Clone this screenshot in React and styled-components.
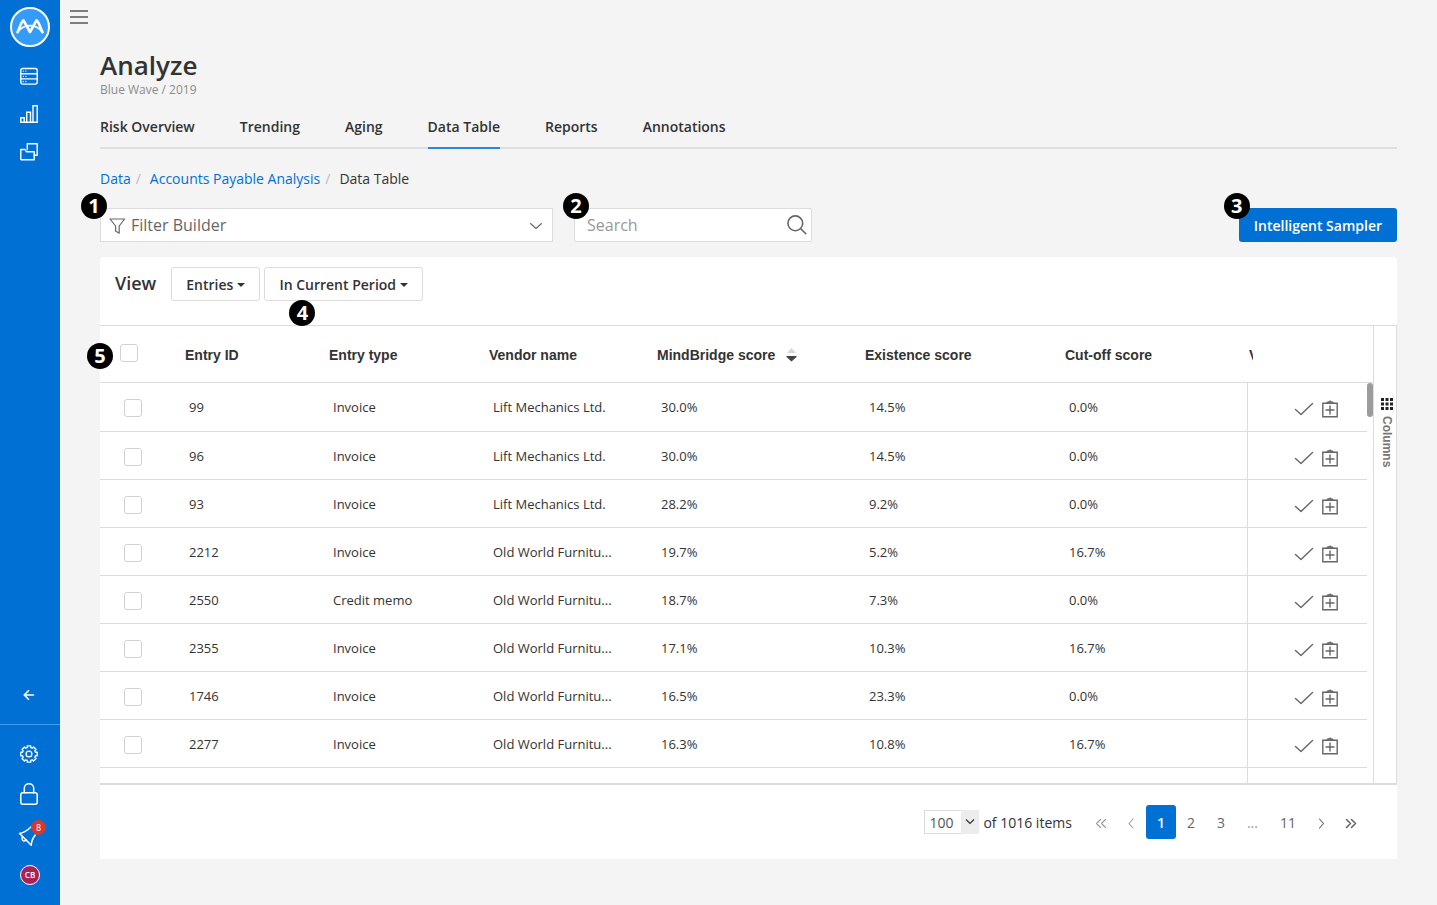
import React from "react";
import styled, { createGlobalStyle, css } from "styled-components";

const GlobalStyle = createGlobalStyle`
  *, *::before, *::after { box-sizing: border-box; }
  body {
    margin: 0;
    background: #f4f4f4;
    color: #333;
    font-family: "Open Sans", "Noto Sans", sans-serif;
    font-size: 14px;
    line-height: 20px;
  }
  button, input, select { font: inherit; color: inherit; }
  button { cursor: pointer; }
  svg { display: block; flex: none; }
`;

const BLUE = "#0070d4";
const LINE = "#dcdcdc";

const Page = styled.div`
  display: flex;
  min-height: 100vh;
`;

const Sidebar = styled.aside`
  flex: none;
  display: flex;
  flex-direction: column;
  width: 60px;
  padding: 7px 0 10px;
  background: ${BLUE};
  color: #fff;
`;

const Logo = styled.a`
  display: block;
  margin: 0 auto 10px;
`;

const SideGroup = styled.nav`
  display: flex;
  flex-direction: column;
`;

const SideFooter = styled(SideGroup)`
  margin-top: auto;
`;

const SideButton = styled.button`
  position: relative;
  display: flex;
  align-items: center;
  justify-content: center;
  width: 100%;
  height: ${(p) => (p.$tall ? 40 : 38)}px;
  padding: 0;
  border: 0;
  background: none;
`;

const Divider = styled.hr`
  width: 100%;
  margin: 10px 0;
  border: 0;
  border-top: 1px solid #3f9cec;
`;

const CountBadge = styled.span`
  position: absolute;
  top: 5px;
  right: 14px;
  width: 15px;
  height: 15px;
  border-radius: 50%;
  background: #cf3a34;
  font-size: 9px;
  line-height: 15px;
  text-align: center;
`;

const Avatar = styled.span`
  width: 20px;
  height: 20px;
  border: 1px solid #fff;
  border-radius: 50%;
  background: #ad1f57;
  font-size: 8px;
  font-weight: 600;
  line-height: 18px;
  text-align: center;
`;

const Main = styled.main`
  flex: 1;
  min-width: 0;
  padding: 0 40px 46px;
`;

const TopBar = styled.div`
  display: flex;
  height: 48px;
  margin-left: -40px;
  padding: 8px 10px;
`;

const MenuButton = styled.button`
  width: 18px;
  height: 18px;
  padding: 0;
  border: 0;
  background: none;
`;

const Title = styled.h1`
  margin: 0;
  font-size: 26px;
  font-weight: 600;
  line-height: 34px;
`;

const Subtitle = styled.p`
  margin: 0;
  color: #8c8c8c;
  font-size: 12px;
  line-height: 16px;
`;

const Tabs = styled.nav`
  display: flex;
  gap: 45px;
  margin-top: 19px;
  border-bottom: 2px solid #dedede;
`;

const Tab = styled.a`
  margin-bottom: -2px;
  padding-bottom: 10px;
  border-bottom: 2px solid ${(p) => (p.$active ? "#2d85dc" : "transparent")};
  color: #333;
  font-weight: 600;
  text-decoration: none;
`;

const Breadcrumb = styled.nav`
  display: flex;
  margin: 20px 0 19px;

  a { color: ${BLUE}; text-decoration: none; }
  i { margin: 0 9px 0 5px; color: #bbb; font-style: normal; }
`;

const Toolbar = styled.div`
  display: flex;
  align-items: center;
  gap: 21px;
  margin-bottom: 15px;
`;

const Anchor = styled.div`
  position: relative;
  ${(p) => p.$end && css`margin-left: auto;`}
`;

const Marker = styled.span`
  position: absolute;
  z-index: 1;
  left: ${(p) => p.$x}px;
  top: ${(p) => p.$y}px;
  width: 26px;
  height: 26px;
  border-radius: 50%;
  background: #000;
  color: #fff;
  font-size: 20px;
  font-weight: 700;
  font-family: "Open Sans", "Noto Sans", sans-serif;
  line-height: 26px;
  text-align: center;
  pointer-events: none;
`;

const FilterButton = styled.button`
  display: flex;
  align-items: center;
  gap: 5px;
  width: 453px;
  height: 34px;
  padding: 0 9px 0 8px;
  border: 1px solid ${LINE};
  background: #fff;
  color: #666;
  font-size: 16px;

  span { flex: 1; text-align: left; }
`;

const SearchBox = styled.label`
  display: flex;
  align-items: center;
  width: 238px;
  height: 34px;
  padding: 0 4px 0 12px;
  border: 1px solid ${LINE};
  border-radius: 2px;
  background: #fff;
`;

const SearchInput = styled.input`
  flex: 1;
  min-width: 0;
  padding: 0;
  border: 0;
  outline: 0;
  background: none;
  font-size: 16px;

  &::placeholder { color: #999; opacity: 1; }
`;

const PrimaryButton = styled.button`
  height: 34px;
  padding: 2px 15px 0;
  border: 0;
  border-radius: 3px;
  background: ${BLUE};
  color: #fff;
  font-weight: 600;
`;

const Card = styled.section`
  border-radius: 4px 4px 0 0;
  background: #fff;
`;

const ViewBar = styled.div`
  display: flex;
  gap: 4px;
  height: 68px;
  padding: 10px 15px;
`;

const ViewLabel = styled.h2`
  margin: 0 11px 0 0;
  font-size: 18px;
  font-weight: 600;
  line-height: 32px;
`;

const DropButton = styled.button`
  display: flex;
  align-items: center;
  gap: 4px;
  height: 34px;
  padding: 2px 14px 0;
  border: 1px solid ${LINE};
  border-radius: 3px;
  background: #fff;
  font-weight: 600;
`;

const Caret = styled.span`
  border: 4px solid transparent;
  border-top-color: #333;
  border-bottom: 0;
`;

const Grid = styled.div`
  display: flex;
  border-top: 1px solid ${LINE};
  border-bottom: 2px solid ${LINE};
`;

const Table = styled.table`
  flex: 1;
  width: 0;
  table-layout: fixed;
  border-collapse: separate;
  border-spacing: 0;
`;

const Col = styled.col`
  width: ${(p) => (p.$w ? `${p.$w}px` : "auto")};
`;

const HeadCell = styled.th`
  position: relative;
  height: 57px;
  padding: 2px 16px 0;
  border-bottom: 1px solid ${LINE};
  font: 700 14px/20px "Liberation Sans", Arial, sans-serif;
  text-align: left;
  white-space: nowrap;
  ${(p) => p.$check && css`padding: 2px 20px 0;`}
  ${(p) => p.$clipped && css`padding: 2px 2px 0;`}
`;

const SortLabel = styled.span`
  display: flex;
  align-items: center;
  gap: 11px;
`;

const ClippedText = styled.span`
  display: block;
  width: 4px;
  overflow: hidden;
`;

const Cell = styled.td`
  height: 48px;
  padding: 0 20px;
  border-bottom: 1px solid ${LINE};
  font-size: 13px;
  white-space: nowrap;
  ${(p) => p.$check && css`padding: 2px 24px 0;`}
  ${(p) => p.$pinned && css`
    padding: 4px 28px 0 46px;
    border-left: 1px solid ${LINE};
  `}
`;

const BodyRow = styled.tr`
  &:first-child td { height: 49px; }
`;

const TailCell = styled.td`
  height: 15px;
  padding: 0;
  ${(p) => p.$pinned && css`border-left: 1px solid ${LINE};`}
`;

const Checkbox = styled.input`
  appearance: none;
  display: block;
  width: 18px;
  height: 18px;
  margin: 0;
  border: 1px solid #d2d2d2;
  border-radius: 3px;
  background: #fff;

  &:checked { background: ${BLUE}; }
`;

const HeadCheckbox = styled(Checkbox)`
  margin-bottom: 4px;
`;

const RowActions = styled.div`
  display: flex;
  align-items: center;
  gap: 7px;
`;

const IconButton = styled.button`
  padding: 0;
  border: 0;
  background: none;
  color: #666;
`;

const ScrollTrack = styled.div`
  width: 6px;

  &::before {
    content: "";
    display: block;
    height: 57px;
    border-bottom: 1px solid ${LINE};
  }
`;

const ScrollThumb = styled.div`
  height: 34px;
  border-radius: 3px;
  background: #9c9c9c;
`;

const ColumnsPanel = styled.div`
  width: 24px;
  padding-top: 72px;
  border: 1px solid ${LINE};
  border-width: 0 1px;
`;

const ColumnsButton = styled.button`
  display: flex;
  flex-direction: column;
  align-items: center;
  gap: 6px;
  width: 100%;
  padding: 0 0 0 4px;
  border: 0;
  background: none;
  color: #777;
  font: 700 12px/16px "Liberation Sans", Arial, sans-serif;

  span { writing-mode: vertical-rl; }
`;

const Footer = styled.div`
  display: flex;
  align-items: center;
  justify-content: flex-end;
  height: 74px;
  padding: 0 30px 0 15px;
`;

const SizeSelect = styled.div`
  position: relative;
  margin-right: 4px;

  svg {
    position: absolute;
    top: 0;
    right: 0;
    pointer-events: none;
  }
`;

const Select = styled.select`
  appearance: none;
  display: block;
  width: 55px;
  height: 24px;
  padding: 2px 4px 0;
  border: 1px solid ${LINE};
  border-radius: 0;
  background: #fff;
  color: #555;
`;

const ItemCount = styled.span`
  padding-top: 2px;
`;

const Pager = styled.nav`
  display: flex;
  margin-left: 14px;
`;

const PageButton = styled.button`
  display: flex;
  align-items: center;
  justify-content: center;
  min-width: 30px;
  height: 34px;
  padding: 2px ${(p) => (p.$icon ? 0 : 11)}px 0;
  border: 0;
  border-radius: 3px;
  background: ${(p) => (p.$current ? BLUE : "none")};
  color: ${(p) => (p.$current ? "#fff" : p.$muted ? "#999" : "#666")};
  font-weight: ${(p) => (p.$current ? 600 : 400)};
`;

const Stroke = ({ size = 20, width = 1.3, children, ...rest }) => (
  <svg
    width={size}
    height={size}
    viewBox={`0 0 ${size} ${size}`}
    fill="none"
    stroke="currentColor"
    strokeWidth={width}
    strokeLinecap="round"
    strokeLinejoin="round"
    aria-hidden="true"
    {...rest}
  >
    {children}
  </svg>
);

const LogoIcon = () => (
  <svg width="40" height="40" viewBox="0 0 40 40" fill="none" aria-hidden="true">
    <circle cx="20" cy="20" r="19" fill="#349cf8" stroke="#fff" strokeWidth="2" />
    <g stroke="#fff" strokeLinecap="round" strokeLinejoin="round">
      <path d="M7.500 25.200C9.500 22 10.500 15.500 13.500 13.300L20 25l6.500-11.700c3 2.200 4 8.700 6 11.900" strokeWidth="2.600" />
      <path d="M8.500 24C11.500 20.500 15 18.700 20 18.700s8.500 1.800 11.500 5.300" strokeWidth="1.800" />
      <path d="M17.300 19.500 20 24.500l2.700-5" strokeWidth="1.400" />
    </g>
  </svg>
);

const TableIcon = () => (
  <Stroke width={1.4}>
    <rect x=".8" y="2.500" width="16.400" height="15.600" rx="2" />
    <path d="M1 7.700h16M1 12.900h16" />
    <path d="M3.200 5.100h.1M5.800 5.100h.1M3.200 10.300h.1M5.800 10.300h.1M3.200 15.500h.1M5.800 15.500h.1" strokeWidth="1.300" />
  </Stroke>
);

const BarsIcon = () => (
  <Stroke width={1.4} strokeLinejoin="miter">
    <path d="M.8 18.300v-4.500h3.400v4.500zM6.700 18.300V8.200h3.800v10.100zM13 18.300V1.800h4.200v16.500zM4.200 18.300h9" />
  </Stroke>
);

const FoldersIcon = () => (
  <Stroke width={1.4}>
    <path d="M7.300 7.500V1.800h9.900v11.400h-3" />
    <path d="M.8 17.300V7.500h4.300l1.300 2.200h7.800v8.100H1.300z" />
  </Stroke>
);

const ArrowLeftIcon = () => (
  <Stroke width={1.6}>
    <path d="M13.500 10h-9M8.500 5.700 4.200 10l4.300 4.300" />
  </Stroke>
);

const GEAR_TEETH = Array.from({ length: 8 }, (_, i) => {
  const at = (r, deg) => {
    const a = ((i * 45 + deg) * Math.PI) / 180;
    return `${(9 + r * Math.cos(a)).toFixed(2)} ${(9 + r * Math.sin(a)).toFixed(2)}`;
  };
  return `${i ? "L" : "M"}${at(6.7, -15)}L${at(8.4, -12)}L${at(8.4, 12)}L${at(6.7, 15)}`;
}).join("");

const GearIcon = () => (
  <Stroke width={1.3}>
    <path d={`${GEAR_TEETH}Z`} />
    <circle cx="9" cy="9" r="2.900" />
  </Stroke>
);

const LockIcon = () => (
  <Stroke size={24} width={1.5}>
    <rect x="2.800" y="9.800" width="16.400" height="11.400" rx="2" />
    <path d="M6.300 9.800V5.200a4.700 4.400 0 0 1 9.400 0v4.600" />
  </Stroke>
);

const MegaphoneIcon = () => (
  <Stroke size={24} width={1.5}>
    <path d="M1.600 10.500C6.500 9.500 10 7 13.500 3.500M1.600 10.500l11.700 11.800c.2-4 1.500-7.300 4-10.300" />
    <path d="M4.300 13.500c-.6 2.300 0 4.500 1.600 4.600 1.200.1 1.900-.6 2.200-1.500" />
  </Stroke>
);

const MenuIcon = () => (
  <Stroke size={18} width={1.6} color="#555" strokeLinecap="butt">
    <path d="M0 3h18M0 9h18M0 15h18" />
  </Stroke>
);

const FunnelIcon = () => (
  <Stroke size={17} width={1.2}>
    <path d="M1 2h14.600L10.200 9v7.200L6.600 14V9z" />
  </Stroke>
);

const ChevronDownIcon = () => (
  <Stroke size={14} width={1.1}>
    <path d="m1.500 5.500 5.500 5 5.500-5" />
  </Stroke>
);

const SearchIcon = () => (
  <Stroke size={20} width={1.6} color="#666">
    <circle cx="8.300" cy="8.300" r="7.400" />
    <path d="m13.800 13.800 5 5" />
  </Stroke>
);

const SortIcon = () => (
  <svg width="11" height="14" viewBox="0 0 11 14" aria-hidden="true">
    <path d="M1 5 5.500 0 10 5z" fill="#d6d6d6" />
    <path d="M.5 8v1l5 4.500 5-4.500V8z" fill="#444" />
  </svg>
);

const CheckIcon = () => (
  <Stroke size={20} width={1.4}>
    <path d="m1.500 10.500 5.500 5L18.500 4.500" />
  </Stroke>
);

const ClipboardPlusIcon = () => (
  <Stroke size={18} width={1.4} strokeLinejoin="miter">
    <path d="M1.800 3.300h14.400v13.500H1.800zM9 6v8M5 10h8" />
    <path d="M5.500 2.800l1.200-1.200h1.100Q9 0 10.200 1.600h1.100l1.200 1.200z" fill="currentColor" strokeWidth=".6" />
  </Stroke>
);

const GridIcon = () => (
  <svg width="12" height="12" viewBox="0 0 12 12" fill="#222" aria-hidden="true">
    {[0, 4.5, 9].map((y) =>
      [0, 4.5, 9].map((x) => <rect key={`${x}-${y}`} x={x} y={y} width="3" height="3" />)
    )}
  </svg>
);

const PAGE_PATHS = {
  first: "M7.500 4.500 3.500 8.500l4 4M12.500 4.500l-4 4 4 4",
  prev: "M10 4 6 8.500l4 4.500",
  next: "M5.500 4l4 4.500-4 4.500",
  last: "M2.500 4.500l4 4-4 4M7.500 4.500l4 4-4 4",
};

const PageIcon = ({ name }) => (
  <Stroke size={16} width={name === "last" ? 1.6 : 1.1}>
    <path d={PAGE_PATHS[name]} />
  </Stroke>
);

const TABS = ["Risk Overview", "Trending", "Aging", "Data Table", "Reports", "Annotations"];

const ROWS = [
  ["99", "Invoice", "Lift Mechanics Ltd.", "30.0%", "14.5%", "0.0%"],
  ["96", "Invoice", "Lift Mechanics Ltd.", "30.0%", "14.5%", "0.0%"],
  ["93", "Invoice", "Lift Mechanics Ltd.", "28.2%", "9.2%", "0.0%"],
  ["2212", "Invoice", "Old World Furnitu...", "19.7%", "5.2%", "16.7%"],
  ["2550", "Credit memo", "Old World Furnitu...", "18.7%", "7.3%", "0.0%"],
  ["2355", "Invoice", "Old World Furnitu...", "17.1%", "10.3%", "16.7%"],
  ["1746", "Invoice", "Old World Furnitu...", "16.5%", "23.3%", "0.0%"],
  ["2277", "Invoice", "Old World Furnitu...", "16.3%", "10.8%", "16.7%"],
];

const COLUMN_WIDTHS = [69, 144, 160, 168, 208, 200, null, 120];

export default function App() {
  return (
    <>
      <GlobalStyle />
      <Page>
        <Sidebar>
          <Logo href="#" aria-label="Home"><LogoIcon /></Logo>
          <SideGroup aria-label="Primary">
            <SideButton aria-label="Data"><TableIcon /></SideButton>
            <SideButton aria-label="Analyze"><BarsIcon /></SideButton>
            <SideButton aria-label="Files"><FoldersIcon /></SideButton>
          </SideGroup>
          <SideFooter aria-label="Account">
            <SideButton aria-label="Back"><ArrowLeftIcon /></SideButton>
            <Divider />
            <SideButton $tall aria-label="Settings"><GearIcon /></SideButton>
            <SideButton $tall aria-label="Security"><LockIcon /></SideButton>
            <SideButton $tall aria-label="Announcements">
              <MegaphoneIcon />
              <CountBadge>8</CountBadge>
            </SideButton>
            <SideButton $tall aria-label="Profile"><Avatar>CB</Avatar></SideButton>
          </SideFooter>
        </Sidebar>

        <Main>
          <TopBar>
            <MenuButton aria-label="Menu"><MenuIcon /></MenuButton>
          </TopBar>
          <Title>Analyze</Title>
          <Subtitle>Blue Wave / 2019</Subtitle>
          <Tabs>
            {TABS.map((tab) => (
              <Tab key={tab} href="#" $active={tab === "Data Table"}>{tab}</Tab>
            ))}
          </Tabs>
          <Breadcrumb aria-label="Breadcrumb">
            <a href="#">Data</a><i>/</i>
            <a href="#">Accounts Payable Analysis</a><i>/</i>
            <span>Data Table</span>
          </Breadcrumb>

          <Toolbar>
            <Anchor>
              <Marker $x={-19} $y={-15}>1</Marker>
              <FilterButton>
                <FunnelIcon />
                <span>Filter Builder</span>
                <ChevronDownIcon />
              </FilterButton>
            </Anchor>
            <Anchor>
              <Marker $x={-11} $y={-15}>2</Marker>
              <SearchBox>
                <SearchInput type="text" placeholder="Search" aria-label="Search" />
                <SearchIcon />
              </SearchBox>
            </Anchor>
            <Anchor $end>
              <Marker $x={-15} $y={-15}>3</Marker>
              <PrimaryButton>Intelligent Sampler</PrimaryButton>
            </Anchor>
          </Toolbar>

          <Card>
            <ViewBar>
              <ViewLabel>View</ViewLabel>
              <DropButton>Entries<Caret /></DropButton>
              <Anchor>
                <DropButton>In Current Period<Caret /></DropButton>
                <Marker $x={25} $y={33}>4</Marker>
              </Anchor>
            </ViewBar>

            <Grid>
              <Table>
                <colgroup>
                  {COLUMN_WIDTHS.map((w, i) => <Col key={i} $w={w} />)}
                </colgroup>
                <thead>
                  <tr>
                    <HeadCell $check>
                      <Marker $x={-13} $y={17}>5</Marker>
                      <HeadCheckbox type="checkbox" aria-label="Select all entries" />
                    </HeadCell>
                    <HeadCell>Entry ID</HeadCell>
                    <HeadCell>Entry type</HeadCell>
                    <HeadCell>Vendor name</HeadCell>
                    <HeadCell><SortLabel>MindBridge score<SortIcon /></SortLabel></HeadCell>
                    <HeadCell>Existence score</HeadCell>
                    <HeadCell>Cut-off score</HeadCell>
                    <HeadCell $clipped><ClippedText>V</ClippedText></HeadCell>
                  </tr>
                </thead>
                <tbody>
                  {ROWS.map((row) => (
                    <BodyRow key={row[0]}>
                      <Cell $check>
                        <Checkbox type="checkbox" aria-label={`Select entry ${row[0]}`} />
                      </Cell>
                      {row.map((value, i) => <Cell key={i}>{value}</Cell>)}
                      <Cell $pinned>
                        <RowActions>
                          <IconButton aria-label="Mark as reviewed"><CheckIcon /></IconButton>
                          <IconButton aria-label="Add to audit plan"><ClipboardPlusIcon /></IconButton>
                        </RowActions>
                      </Cell>
                    </BodyRow>
                  ))}
                  <tr aria-hidden="true">
                    <TailCell colSpan={7} />
                    <TailCell $pinned />
                  </tr>
                </tbody>
              </Table>
              <ScrollTrack><ScrollThumb /></ScrollTrack>
              <ColumnsPanel>
                <ColumnsButton><GridIcon /><span>Columns</span></ColumnsButton>
              </ColumnsPanel>
            </Grid>

            <Footer>
              <SizeSelect>
                <Select aria-label="Items per page" defaultValue="100">
                  <option>50</option>
                  <option>100</option>
                </Select>
                <svg width="18" height="24" viewBox="0 0 18 24" aria-hidden="true">
                  <rect width="18" height="24" fill="#ececec" />
                  <path d="m5 9.500 4 4 4-4" fill="none" stroke="#333" strokeWidth="1.200" />
                </svg>
              </SizeSelect>
              <ItemCount>of 1016 items</ItemCount>
              <Pager aria-label="Pagination">
                <PageButton $icon $muted aria-label="First page"><PageIcon name="first" /></PageButton>
                <PageButton $icon $muted aria-label="Previous page"><PageIcon name="prev" /></PageButton>
                <PageButton $current>1</PageButton>
                <PageButton>2</PageButton>
                <PageButton>3</PageButton>
                <PageButton $muted>...</PageButton>
                <PageButton>11</PageButton>
                <PageButton $icon aria-label="Next page"><PageIcon name="next" /></PageButton>
                <PageButton $icon aria-label="Last page"><PageIcon name="last" /></PageButton>
              </Pager>
            </Footer>
          </Card>
        </Main>
      </Page>
    </>
  );
}
